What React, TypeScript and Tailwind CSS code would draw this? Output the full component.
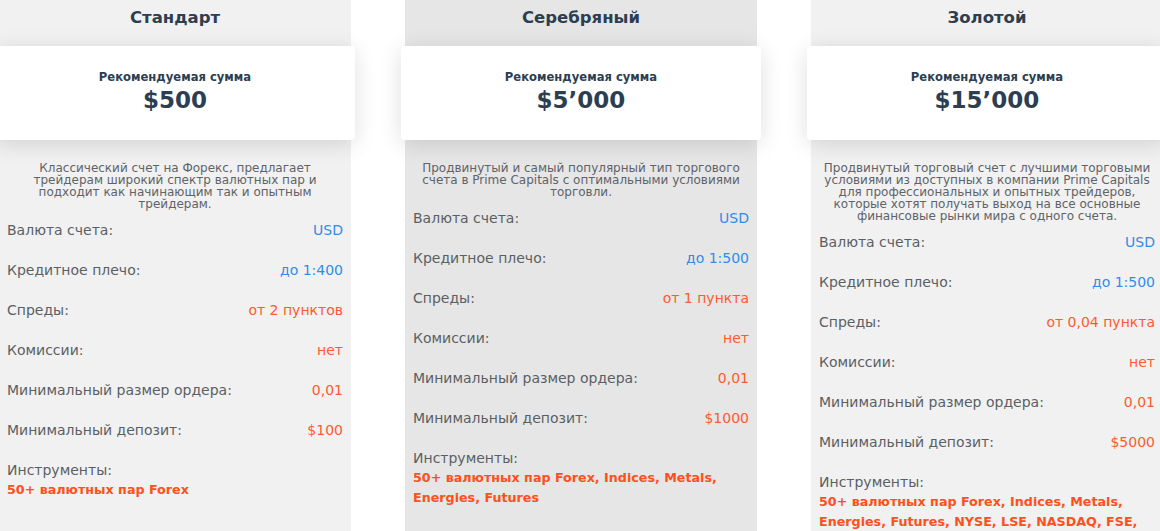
const plans = [
  {
    title: "Стандарт",
    amount: "$500",
    desc: ["Классический счет на Форекс, предлагает", "трейдерам широкий спектр валютных пар и", "подходит как начинающим так и опытным", "трейдерам."],
    leverage: "до 1:400",
    spread: "от 2 пунктов",
    deposit: "$100",
    tools: ["50+ валютных пар Forex"],
    bg: "bg-[#f1f1f1]",
  },
  {
    title: "Серебряный",
    amount: "$5’000",
    desc: ["Продвинутый и самый популярный тип торгового", "счета в Prime Capitals с оптимальными условиями", "торговли."],
    leverage: "до 1:500",
    spread: "от 1 пункта",
    deposit: "$1000",
    tools: ["50+ валютных пар Forex, Indices, Metals,", "Energies, Futures"],
    bg: "bg-[#e6e6e6]",
  },
  {
    title: "Золотой",
    amount: "$15’000",
    desc: [
      "Продвинутый торговый счет с лучшими торговыми",
      "условиями из доступных в компании Prime Capitals",
      "для профессиональных и опытных трейдеров,",
      "которые хотят получать выход на все основные",
      "финансовые рынки мира с одного счета.",
    ],
    leverage: "до 1:500",
    spread: "от 0,04 пункта",
    deposit: "$5000",
    tools: ["50+ валютных пар Forex, Indices, Metals,", "Energies, Futures, NYSE, LSE, NASDAQ, FSE,"],
    bg: "bg-[#f1f1f1]",
  },
];

type Plan = (typeof plans)[number];

const Row = ({ label, value, blue }: { label: string; value: string; blue?: boolean }) => (
  <div className="flex h-10 items-center justify-between px-2 text-[14px]">
    <span className="text-[#5a5f64]">{label}</span>
    <span className={blue ? "text-[#2e8ded]" : "text-[#ff5a2e]"}>{value}</span>
  </div>
);

const PlanColumn = ({ plan }: { plan: Plan }) => (
  <div className={`w-[352px] shrink-0 min-h-[531px] ${plan.bg}`}>
    <div className="h-[46px] pt-[6px] text-center text-[16.5px] font-bold leading-[24px] text-[#2c3e50]">{plan.title}</div>
    <div className="relative z-10 -mx-1 flex h-[94px] flex-col items-center rounded bg-white pt-[22px] text-[#2c3e50] shadow-[0_4px_22px_rgba(0,0,0,0.13)]">
      <div className="text-[11.6px] font-bold leading-[18px]">Рекомендуемая сумма</div>
      <div className="text-[23px] font-bold leading-[28px]">{plan.amount}</div>
    </div>
    <div className="mt-[22px] px-2 text-center text-[12px] leading-[12px] text-[#5f6368]">
      {plan.desc.map((line) => (
        <div key={line}>{line}</div>
      ))}
    </div>
    <Row label="Валюта счета:" value="USD" blue />
    <Row label="Кредитное плечо:" value={plan.leverage} blue />
    <Row label="Спреды:" value={plan.spread} />
    <Row label="Комиссии:" value="нет" />
    <Row label="Минимальный размер ордера:" value="0,01" />
    <Row label="Минимальный депозит:" value={plan.deposit} />
    <div className="mt-[10px] px-2 leading-[20px]">
      <div className="text-[14px] text-[#5a5f64]">Инструменты:</div>
      {plan.tools.map((line) => (
        <div key={line} className="whitespace-nowrap text-[12.7px] font-bold text-[#ff4f20]">
          {line}
        </div>
      ))}
    </div>
  </div>
);

const App = () => {
  return (
    <div className="h-[531px] w-[1160px] overflow-hidden bg-white font-['DejaVu_Sans',sans-serif]">
      <div className="-ml-px flex gap-[54px]">
        {plans.map((plan) => (
          <PlanColumn key={plan.title} plan={plan} />
        ))}
      </div>
    </div>
  );
};

export default App;
